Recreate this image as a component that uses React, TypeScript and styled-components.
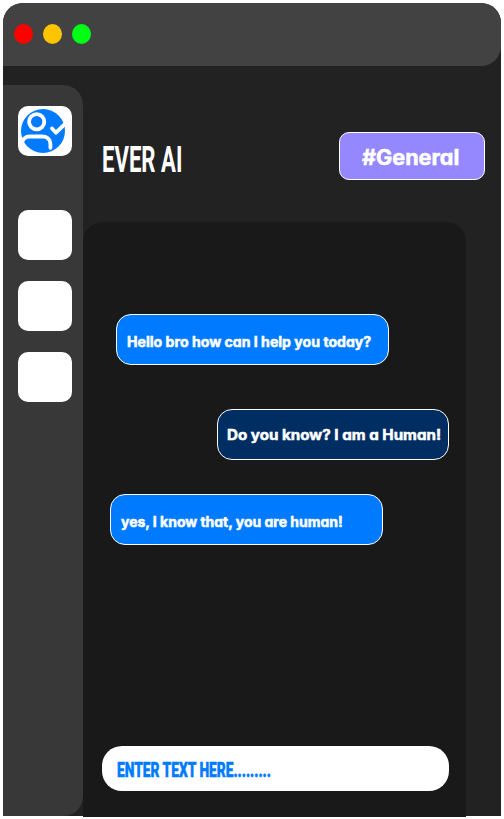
import React from "react";
import styled, { createGlobalStyle } from "styled-components";

const GlobalStyle = createGlobalStyle`
  * { box-sizing: border-box; }
  body { margin: 0; background: #fff; overflow: hidden; }
`;

const Page = styled.div`
  width: 504px;
  height: 819px;
  padding: 3px;
`;

const Window = styled.main`
  display: flex;
  flex-direction: column;
  width: 498px;
  height: 813px;
  background: #222;
  border-radius: 20px 20px 0 0;
`;

const TitleBar = styled.header`
  display: flex;
  gap: 10px;
  height: 63px;
  flex: none;
  padding: 21px 11px;
  background: #424242;
  border-radius: 20px 20px 20px 0;
`;

const Dot = styled.span<{ $color: string }>`
  width: 19px;
  height: 20px;
  border-radius: 50%;
  background: ${(p) => p.$color};
`;

const Body = styled.div`
  display: flex;
  flex: 1;
`;

const Sidebar = styled.nav`
  display: flex;
  flex-direction: column;
  gap: 21px;
  width: 80px;
  height: 731px;
  margin-top: 19px;
  padding: 21px 15px;
  background: #383838;
  border-radius: 0 20px 20px 0;
`;

const Tile = styled.div<{ $spaced?: boolean }>`
  width: 54px;
  height: 50px;
  margin-bottom: ${(p) => (p.$spaced ? 33 : 0)}px;
  background: #fff;
  border-radius: 10px;

  svg { display: block; }
`;

const Main = styled.section`
  width: 418px;
`;

const Heading = styled.div`
  display: flex;
  justify-content: space-between;
  height: 156px;
  padding: 66px 16px 0 19px;
`;

const Condensed = styled.span<{ $size: number; $scale: number }>`
  display: block;
  font-family: "Roboto", "Liberation Sans", sans-serif;
  font-size: ${(p) => p.$size}px;
  line-height: 1;
  white-space: nowrap;
  transform: scaleX(${(p) => p.$scale});
  transform-origin: left;
`;

const Title = styled(Condensed)`
  width: 90px;
  margin-top: 10px;
  color: #fff;
  font-weight: 700;
`;

const Rounded = styled.span<{ $size: number; $scale: number }>`
  display: block;
  font-family: "Inter", "Open Sans", sans-serif;
  font-feature-settings: "cv11" 1;
  font-size: ${(p) => p.$size}px;
  font-weight: 700;
  line-height: 20px;
  color: #fff;
  -webkit-text-stroke: 0.5px #fff;
  white-space: nowrap;
  transform: scaleX(${(p) => p.$scale});
  transform-origin: left;
`;

const Channel = styled.div`
  width: 146px;
  height: 48px;
  padding: 15px 22px;
  background: #9588ff;
  border: 1px solid #fff;
  border-radius: 10px;
`;

const Chat = styled.div`
  display: flex;
  flex-direction: column;
  width: 383px;
  height: 595px;
  padding: 92px 17px 26px 19px;
  background: #191919;
  border-radius: 20px 20px 0 0;
`;

const Bubble = styled.div<{ $width: number; $left: number; $gap: number; $top: number; $own?: boolean }>`
  width: ${(p) => p.$width}px;
  height: 51px;
  margin-left: ${(p) => p.$left}px;
  margin-bottom: ${(p) => p.$gap}px;
  padding: ${(p) => p.$top}px 0 0 ${(p) => (p.$own ? 9 : 10)}px;
  background: ${(p) => (p.$own ? "#002d62" : "#007bff")};
  border: 1px solid #fff;
  border-radius: 15px;
`;

const Composer = styled.div`
  width: 347px;
  height: 45px;
  margin-top: auto;
  padding: 14px 15px;
  background: #fff;
  border-radius: 20px;
`;

const Placeholder = styled(Condensed)`
  color: #007bff;
  font-weight: 900;
  -webkit-text-stroke: 0.5px #007bff;
`;

const UserIcon = () => (
  <svg width="54" height="50" viewBox="0 0 54 50" fill="none">
    <circle cx="25" cy="25" r="22" fill="#007bff" />
    <g stroke="#fff" strokeWidth="3.8" strokeLinecap="round" strokeLinejoin="round">
      <circle cx="18.7" cy="15.7" r="7.6" />
      <path d="M4 38c0-5 3.5-7.5 8-7.5h12.500c5 0 7.900 3 7.900 7.500v3.800" />
      <path d="M34 22.500l4 4.200 9-8.900" />
    </g>
  </svg>
);

const messages = [
  { text: "Hello bro how can I help you today?", width: 273, left: 14, gap: 44, top: 17, scale: 1.008, size: 14 },
  { text: "Do you know? I am a Human!", width: 232, left: 115, gap: 34, top: 15, scale: 1.046, size: 14.5, own: true },
  { text: "yes, I know that, you are human!", width: 273, left: 8, gap: 0, top: 17, scale: 0.998, size: 14 },
];

export default function App() {
  return (
    <Page>
      <GlobalStyle />
      <Window>
        <TitleBar>
          <Dot $color="#ff0000" />
          <Dot $color="#ffc400" />
          <Dot $color="#00ff15" />
        </TitleBar>
        <Body>
          <Sidebar>
            <Tile $spaced>
              <UserIcon />
            </Tile>
            <Tile />
            <Tile />
            <Tile />
          </Sidebar>
          <Main>
            <Heading>
              <Title $size={36} $scale={0.615}>EVER AI</Title>
              <Channel>
                <Rounded $size={21} $scale={1.03}>#General</Rounded>
              </Channel>
            </Heading>
            <Chat>
              {messages.map((m) => (
                <Bubble key={m.text} $width={m.width} $left={m.left} $gap={m.gap} $top={m.top} $own={m.own}>
                  <Rounded $size={m.size} $scale={m.scale}>{m.text}</Rounded>
                </Bubble>
              ))}
              <Composer>
                <Placeholder $size={21} $scale={0.655}>ENTER TEXT HERE.........</Placeholder>
              </Composer>
            </Chat>
          </Main>
        </Body>
      </Window>
    </Page>
  );
}
